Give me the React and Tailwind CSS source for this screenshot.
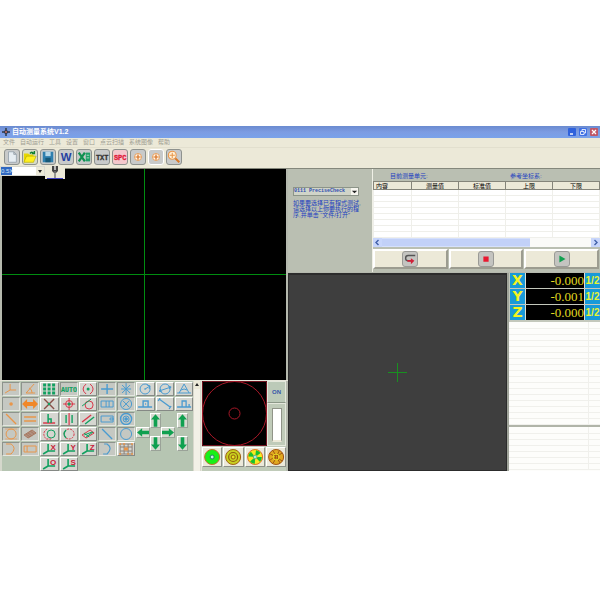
import React, { useState } from 'react';

const menus = ['文件', '自动运行', '工具', '设置', '窗口', '点云扫描', '系统图像', '帮助'];

const axes = [
  { name: 'X', value: '-0.000' },
  { name: 'Y', value: '-0.001' },
  { name: 'Z', value: '-0.000' },
];

const columns = ['内容', '测量值', '标准值', '上限', '下限'];

const O = '#e8964a';
const B = '#4a9bd0';
const G = '#12a060';
const R = '#d8384a';

// Small text drawn inside an icon
const Label = ({ x, y, size, color, children }) => (
  <text x={x} y={y} fontSize={size} fill={color} stroke="none" fontWeight="bold" textAnchor="middle" fontFamily="Liberation Sans, sans-serif">
    {children}
  </text>
);

const axisIcon = (letter) => (
  <>
    <path d="M8 2v7h7M8 9l-5 3" stroke={G} strokeWidth="1.6" />
    <Label x={13} y={7.5} size={8} color="#c82038">{letter}</Label>
  </>
);

const centerIcon = (
  <>
    <circle cx="8" cy="8" r="4" fill="#fff8ec" stroke={O} strokeWidth="1" />
    <path d="M8 5v6M5 8h6" stroke="#d87020" strokeWidth="1.4" />
  </>
);

// Toolbar icons, 16x16
const toolbar = [
  { label: '新建', icon: <path d="M4 2h6l3 3v9H4zM10 2v3h3" fill="#e6edf2" stroke="#98a4ae" /> },
  { label: '打开', bg: 'bg-[#d8dcc8]', icon: <><path d="M1 4h5l1 1h5v9H1z" fill="#e8d800" /><path d="M1 14l3-7h11l-3 7z" fill="#fff020" stroke="#a8a000" strokeWidth=".6" /><path d="M8 4q2-3 4 0M13 1v3h-3" stroke="#108030" strokeWidth="1.6" /></> },
  { label: '保存', icon: <><path d="M2 2h12v12H2z" fill="#2f7fae" /><path d="M5 2h6v5H5z" fill="#b8d8e8" /><path d="M5 9h6v5H5z" fill="#165878" /></> },
  { label: 'Word', icon: <Label x={8} y={13} size={13} color="#2440a0">W</Label> },
  { label: 'Excel', icon: <><path d="M10 3h5v10h-5z" fill="#20a068" /><path d="M11 6h3M11 9h3" stroke="#d8f0e4" strokeWidth=".8" /><path d="M2 3l7 10M9 3L2 13" stroke="#109050" strokeWidth="2.6" /></> },
  { label: '文本', icon: <text x="1" y="11" fontSize="8" fill="#333" stroke="#333" strokeWidth=".3" fontFamily="Liberation Mono, monospace" fontWeight="bold">TXT</text> },
  { label: 'SPC', bg: 'bg-[#f4c8cc]', icon: <text x="1" y="11" fontSize="8" fill="#e01838" stroke="#e01838" strokeWidth=".3" fontFamily="Liberation Mono, monospace" fontWeight="bold">SPC</text> },
  { label: '定位', icon: centerIcon },
  { label: '对中', active: true, icon: centerIcon },
  { label: '放大', icon: <><path d="M9 9l5 5" stroke="#d87828" strokeWidth="2.400" /><circle cx="6" cy="6" r="4.500" fill="#fff0d8" stroke={O} strokeWidth="1.200" /><path d="M6 3v6M3 6h6" stroke={O} strokeWidth="1.200" /></> },
];

// Measuring tools, one array per row, 18x14 each
const tools = [
  [
    { off: true, c: O, icon: <path d="M8 2v6l-5 3M8 8h6" /> },
    { off: true, c: O, icon: <path d="M13 2L5 11h9M8 6q3 1 3 5" /> },
    { c: G, icon: <path d="M3 3h3M7.500 3h3M12 3h3M3 7h3M7.500 7h3M12 7h3M3 11h3M7.500 11h3M12 11h3" strokeWidth="3" /> },
    { c: G, off: true, icon: <text x="1" y="9.500" fontSize="6.600" fontWeight="bold" fill={G} stroke={G} strokeWidth=".2" fontFamily="Liberation Mono, monospace">AUTO</text> },
    { c: R, icon: <><path d="M7 2Q1 7 7 12M11 2q6 5 0 10" /><circle cx="9" cy="7" r="1.500" fill={G} stroke="none" /></> },
    { off: true, c: B, icon: <path d="M9 2v10M3 7h12" strokeWidth="1.400" /> },
    { off: true, c: B, icon: <path d="M9 1v12M4 7h10M5 3l8 8M13 3l-8 8" /> },
    { c: B, icon: <><circle cx="9" cy="7" r="5" /><path d="M9 7l5-3M11 3l3 1-1 3M8 7h2" /></> },
    { c: B, icon: <><circle cx="9" cy="7" r="5" /><path d="M3 9l12-4M5 7L3 9l3 1M12 4l3 1-2 2" /></> },
    { c: B, icon: <path d="M9 2L4 11M9 2l5 9M2 11h14M6 8q3-2 6 0" /> },
  ],
  [
    { off: true, c: O, icon: <circle cx="9" cy="7" r="1.800" fill={O} stroke="none" /> },
    { off: true, c: '#f08828', icon: <path d="M1 7l5-5v3h6V2l5 5-5 5V9H6v3z" fill="#f08828" stroke="none" /> },
    { c: '#8a5048', icon: <><path d="M4 2l10 10M14 2L4 12" strokeWidth="1.400" /><circle cx="9" cy="7" r="1.300" fill={G} stroke="none" /></> },
    { c: R, icon: <><circle cx="9" cy="7" r="3.500" /><path d="M9 1v12M3 7h12" /><circle cx="9" cy="7" r="1.500" fill={G} stroke="none" /></> },
    { c: R, icon: <><circle cx="10" cy="8" r="4" /><path d="M3 9l9-7" stroke={G} /></> },
    { off: true, c: B, icon: <><path d="M3 4h12v6H3z" /><path d="M8 4v6M11 4v6" /></> },
    { off: true, c: B, icon: <><circle cx="9" cy="7" r="5.500" /><path d="M6 4l6 6M12 4l-6 6" /></> },
    { c: B, icon: <path d="M2 10h14M7 10V4h5v6M9 7h1" strokeWidth="1.400" /> },
    { c: B, icon: <path d="M3 2l11 8M2 4l2-3M13 12l2-3" strokeWidth="1.300" /> },
    { c: B, icon: <path d="M2 10h14M7 10V4h4v6M14 7v3" strokeWidth="1.300" /> },
  ],
  [
    { off: true, c: O, icon: <path d="M4 2l10 10" strokeWidth="1.300" /> },
    { off: true, c: O, icon: <path d="M3 5h12M3 9h12" strokeWidth="1.300" /> },
    { c: G, icon: <><path d="M3 11h12" stroke={R} strokeWidth="1.500" /><path d="M8 2v9M8 7h3v4" strokeWidth="1.500" /></> },
    { c: G, icon: <><path d="M9 1v12" stroke={R} strokeWidth="1.200" /><path d="M6 3v8M12 3v8" strokeWidth="1.400" /></> },
    { c: R, icon: <><path d="M3 10l9-7" strokeWidth="1.400" /><path d="M6 12l9-7" stroke={G} strokeWidth="1.400" /></> },
    { off: true, c: B, icon: <path d="M3 4h12v6H3zM12 6h3v2h-3z" /> },
    { off: true, c: B, icon: <><circle cx="9" cy="7" r="5.500" strokeWidth="1.400" /><circle cx="9" cy="7" r="3" /><circle cx="9" cy="7" r="1.300" fill={B} /></> },
  ],
  [
    { off: true, c: O, icon: <><circle cx="9" cy="7" r="5" /><path d="M3 2h12M3 12h12" strokeWidth=".6" /></> },
    { off: true, c: '#a87860', icon: <path d="M3 8l8-5 4 3-8 5zM5 7l4 3M7 6l4 3M9 4l4 3" fill="#b09080" /> },
    { c: G, icon: <><circle cx="11" cy="7" r="4" /><path d="M7 2Q1 6 6 12h5" stroke={R} strokeDasharray="2 1" /></> },
    { c: R, icon: <><circle cx="9" cy="7" r="5" strokeDasharray="2 1" /><path d="M6 3Q2 7 6 11" stroke={G} strokeWidth="1.300" /></> },
    { c: R, icon: <><path d="M3 8l8-5 4 3-8 5z" /><path d="M5 8l8-3M7 10l7-5M5 6l5 4" stroke={G} /></> },
    { off: true, c: B, icon: <path d="M4 2l10 10" strokeWidth="1.400" /> },
    { off: true, c: B, icon: <circle cx="9" cy="7" r="5.500" /> },
  ],
  [
    { off: true, c: O, icon: <path d="M4 2h5q6 4 0 10H4" /> },
    { off: true, c: O, icon: <path d="M3 4h12v6H3zM6 4v6" /> },
    { icon: axisIcon('X') },
    { icon: axisIcon('Y') },
    { icon: axisIcon('Z') },
    { off: true, c: B, icon: <path d="M6 2h3q6 4 0 10H5" strokeWidth="1.200" /> },
    { c: '#8a8078', icon: <><path d="M3 2h12v10H3zM7 2v10M11 2v10M3 5h12M3 9h12" /><path d="M7 7h4" stroke={O} strokeWidth="3" /><path d="M2 2h2M14 2h2M2 12h2M14 12h2M6 2h2M10 12h2" stroke={O} strokeWidth="1.600" /></> },
  ],
  [null, null, { icon: axisIcon('O') }, { icon: axisIcon('S') }],
];

const ToolButton = ({ tool, label }) => (
  <button
    type="button"
    aria-label={label}
    className={`h-[14px] border ${tool.off
      ? 'bg-[#c5c8c2] border-t-[#8d938c] border-l-[#8d938c] border-b-[#e4e6e0] border-r-[#e4e6e0]'
      : 'bg-[#d5d6d0] border-t-white border-l-white border-b-[#858985] border-r-[#858985]'}`}
  >
    <svg viewBox="1 1 16 12" className="w-full h-full" fill="none" stroke={tool.c}>{tool.icon}</svg>
  </button>
);

const Arrow = ({ dir }) => {
  const vertical = dir === 'up' || dir === 'down';
  return (
    <button
      type="button"
      aria-label={dir}
      className={`shrink-0 bg-[#d5dacf] border border-t-white border-l-white border-b-[#9aa298] border-r-[#9aa298] ${vertical ? 'w-[11px] h-[15px]' : 'w-[14px] h-[11px]'}`}
    >
      {vertical ? (
        <svg viewBox="0 0 10 14" className="w-full h-full"><path d={dir === 'up' ? 'M5 0l5 6H7v8H3V6H0z' : 'M5 14l5-6H7V0H3v8H0z'} fill="#10a050" /></svg>
      ) : (
        <svg viewBox="0 0 14 10" className="w-full h-full"><path d={dir === 'left' ? 'M0 5l6-5v3h8v4H6v3z' : 'M14 5L8 0v3H0v4h8v3z'} fill="#10a050" /></svg>
      )}
    </button>
  );
};

const lights = [
  { label: '底光', icon: <><circle cx="9" cy="9" r="7.500" fill="#18f018" stroke="#c07030" /><circle cx="9" cy="9" r="2" fill="#c8f0e0" stroke="#208060" /></> },
  { label: '环光', icon: <><circle cx="9" cy="9" r="7.500" fill="#c8d020" stroke="#a06010" /><circle cx="9" cy="9" r="4.500" fill="none" stroke="#906010" strokeWidth="1.200" /><circle cx="9" cy="9" r="2" fill="#e8e020" stroke="#906010" /></> },
  { label: '分区光', icon: <><circle cx="9" cy="9" r="7.500" fill="#f8e820" stroke="#e07020" /><circle cx="9" cy="9" r="4.500" fill="none" stroke="#18c030" strokeWidth="4.500" strokeDasharray="3.500 3.600" /><circle cx="9" cy="9" r="1.800" fill="#a0f0e8" stroke="#408080" strokeWidth=".6" /></> },
  { label: '全部光', icon: <><circle cx="9" cy="9" r="7.500" fill="#e0a820" stroke="#a05010" /><path d="M3 6q6 4 12-1M3 12q5-5 12 1M6 3q5 6 0 12M12 3q-4 6 1 12" stroke="#a05810" fill="none" /><circle cx="9" cy="9" r="3" fill="none" stroke="#e8e020" /></> },
];

const runButtons = [
  { label: '返回', icon: <><path d="M14 4H6q-3 0-3 3t3 3h3" stroke="#555" strokeWidth="1.6" fill="none" /><path d="M5 10h5" stroke="#d02038" strokeWidth="2" /><path d="M9 7l4 3-4 4z" fill="#d02038" /></> },
  { label: '停止', icon: <path d="M5 5h6v6H5z" fill="#e81830" /> },
  { label: '运行', icon: <path d="M5 4l7 4-7 4z" fill="#10a050" /> },
];

const TitleBar = () => (
  <header className="flex items-center h-3 px-[2px] bg-linear-to-b from-[#6a8bd0] via-[#7d9ce2] to-[#7aa2ea]">
    <svg viewBox="0 0 8 8" className="w-2 h-2 mr-[2px]"><path d="M4 0v8M0 4h8" stroke="#405068" strokeWidth="2" /><circle cx="4" cy="4" r="2" fill="#303c50" /><circle cx="4" cy="4" r="1" fill="#d07060" /></svg>
    <h1 className="grow text-[7px] leading-3 font-bold text-white">自动测量系统V1.2</h1>
    <div className="flex gap-[3px]">
      <button type="button" aria-label="最小化" className="w-2 h-2 rounded-[1px] bg-[#2f62dc]">
        <svg viewBox="0 0 8 8"><path d="M2 6h3" stroke="#fff" strokeWidth="1.400" /></svg>
      </button>
      <button type="button" aria-label="还原" className="w-2 h-2 rounded-[1px] bg-[#3f70e4]">
        <svg viewBox="0 0 8 8" fill="none" stroke="#fff"><path d="M3 3V1.500h3.500V5H5M1.500 3.500H5v3H1.500z" strokeWidth=".8" /></svg>
      </button>
      <button type="button" aria-label="关闭" className="w-2 h-2 rounded-[1px] bg-[#c05868]">
        <svg viewBox="0 0 8 8"><path d="M2 2l4 4M6 2L2 6" stroke="#fff" strokeWidth="1.200" /></svg>
      </button>
    </div>
  </header>
);

const Camera = () => (
  <section className="relative h-[211px] bg-black border-x-2 border-[#b5b9ae]">
    <svg className="block w-full h-full" stroke="#008c10" shapeRendering="crispEdges">
      <line x1="50%" y1="0" x2="50%" y2="100%" />
      <line x1="0" y1="50%" x2="100%" y2="50%" />
    </svg>
    <div className="absolute -top-[3px] -left-[2px] flex items-start">
      <div className="relative">
        <select aria-label="倍率" className="block w-[45px] h-[10px] appearance-none bg-white bg-linear-to-r from-[#3068c0] from-25% to-white to-25% border border-[#d8d8d0] text-[6px] leading-2 text-[#d0e4f8]">
          <option>0.5X</option>
        </select>
        <svg viewBox="0 0 8 8" className="absolute right-[1px] top-[1px] w-2 h-2 bg-[#ece9d8] pointer-events-none"><path d="M2 3h4L4 6z" fill="#222" /></svg>
      </div>
      <div className="flex pl-[2px] pr-[2px] bg-[#ece9d8]">
        <button type="button" aria-label="探针" className="w-4 h-[13px] bg-[#ece9d8] border-b border-[#4040c0]">
          <svg viewBox="0 0 14 12" className="w-full h-full"><path d="M4 0h6v5L8 7H6L4 5z" fill="#444" /><path d="M7 5v7" stroke="#777" strokeWidth="1.400" /><path d="M6 0h2v4H6z" fill="#bbb" /></svg>
        </button>
      </div>
    </div>
  </section>
);

const ToolPanel = () => (
  <section className="flex flex-1 min-w-0 bg-[#b6c5b2] border-l-2 border-[#d5d8cc]">
    <div className="flex-1 min-w-0 pt-[1px]">
      <div className="grid grid-cols-10 gap-[1px]">
        {tools.slice(0, 2).map((row, r) => row.map((tool, i) => <ToolButton key={`${r}-${i}`} tool={tool} label={`工具 ${r + 1}-${i + 1}`} />))}
      </div>
      <div className="grid grid-cols-10 gap-[1px] mt-[1px]">
        <div className="col-span-7 grid grid-cols-7 gap-[1px]">
          {tools.slice(2).map((row, r) => row.map((tool, i) => (
            tool
              ? <ToolButton key={`${r}-${i}`} tool={tool} label={`工具 ${r + 3}-${i + 1}`} />
              : <span key={`${r}-${i}`} />
          )))}
        </div>
        <div className="col-span-3 flex items-center self-start pt-[1px]">
          <Arrow dir="left" />
          <div className="flex flex-col gap-2"><Arrow dir="up" /><Arrow dir="down" /></div>
          <Arrow dir="right" />
          <div className="flex flex-col gap-2 ml-[2px]"><Arrow dir="up" /><Arrow dir="down" /></div>
        </div>
      </div>
    </div>
    <div className="w-2 shrink-0 bg-[#f2f0e6] border-x border-[#d8d8cc]">
      <svg viewBox="0 0 6 8" className="w-full h-2 bg-[#ece9d8]"><path d="M3 2l2 3H1z" fill="#222" /></svg>
    </div>
  </section>
);

const LightPanel = () => {
  const [level, setLevel] = useState(0);
  return (
    <section className="w-[87px] shrink-0 bg-[#c0cbb9] border-l border-r-2 border-[#e6e6da] border-r-[#b5b9ae]">
      <div className="flex">
        <svg viewBox="0 0 65 65" className="w-[65px] h-[65px] bg-black" fill="none" stroke="#a81828">
          <path d="M.5 .5h64v64H.5z" stroke="#701420" />
          <circle cx="32.500" cy="32.500" r="32" />
          <circle cx="32.500" cy="32.500" r="5.500" />
        </svg>
        <div className="grow flex flex-col">
          <button type="button" className="h-[22px] bg-[#bccab8] border border-[#e4e8dc] border-b-[#8c9888] text-[6px] font-bold text-[#3858a8]">ON</button>
          <div className="grow flex justify-center items-center border border-[#e4e8dc]">
            <input
              type="range"
              aria-label="亮度"
              min="0"
              max="100"
              value={level}
              onChange={(e) => setLevel(e.target.value)}
              className="appearance-none w-[10px] h-[34px] bg-white border border-[#909488] border-b-2 border-b-[#ece9d8] [writing-mode:vertical-lr] [&::-webkit-slider-thumb]:appearance-none"
            />
          </div>
        </div>
      </div>
      <div className="flex gap-[1px] mt-[1px]">
        {lights.map((light) => (
          <button key={light.label} type="button" aria-label={light.label} className="grow h-5 bg-[#ebe9da] border border-t-white border-l-white border-[#8c9088]">
            <svg viewBox="0 0 18 18" className="w-full h-full">{light.icon}</svg>
          </button>
        ))}
      </div>
    </section>
  );
};

const ProgramPanel = () => (
  <section className="w-[84px] shrink-0 pt-[18px] pl-[5px] bg-[#babfb2]">
    <div className="relative w-[66px]">
      <select aria-label="程序" className="block w-full h-[9px] appearance-none bg-[#d0d4c8] border border-[#8c9488] text-[5px] leading-[7px] font-bold text-[#3050b0] font-['Liberation_Mono','Noto_Sans_CJK_SC',monospace]">
        <option>0111 PreciseCheck</option>
      </select>
      <svg viewBox="0 0 8 8" className="absolute right-[1px] top-[1px] w-[7px] h-[7px] bg-[#f6f5ee] pointer-events-none"><path d="M1 3h6L4 6z" fill="#222" /></svg>
    </div>
    <p className="mt-1 text-[6px] leading-[6px] text-[#1c40c0] whitespace-nowrap">
      如果要选择已有程式测试,<br />请选择以上你要执行的程<br />序,并单击 “文件/打开”
    </p>
  </section>
);

const DataPanel = () => (
  <section className="flex-1 min-w-0 bg-[#babfb2] border-l border-[#f0f0e6]">
    <div className="flex h-3 pt-[3px] pl-[17px] text-[6px] leading-2 text-[#1c40c0]">
      <span className="w-[120px]">目前测量单元:</span>
      <span>参考坐标系:</span>
    </div>
    <table className="w-full table-fixed border-collapse bg-white text-[6px] leading-[6px]">
      <thead>
        <tr className="bg-[#ece9d8]">
          {columns.map((name, i) => (
            <th key={name} className={`h-2 p-0 font-normal text-black border border-[#85857a] ${i === 0 ? 'w-[38px] text-left pl-[2px]' : ''}`}>{name}</th>
          ))}
        </tr>
      </thead>
      <tbody>
        {[...Array(8)].map((_, r) => (
          <tr key={r}>
            {columns.map((name) => <td key={name} className="h-[6px] p-0 border border-[#efefea]" />)}
          </tr>
        ))}
      </tbody>
    </table>
    <div className="flex h-[9px] bg-[#fafaf8]">
      <button type="button" aria-label="向左" className="w-[9px] bg-[#c8d6fb]"><svg viewBox="0 0 9 9"><path d="M5.500 2L3 4.500 5.500 7" stroke="#4060a8" fill="none" strokeWidth="1.400" /></svg></button>
      <div className="grow flex"><div className="w-[71%] bg-[#c2d1f8] border-y border-[#d5e0fc]" /></div>
      <button type="button" aria-label="向右" className="w-[9px] bg-[#c8d6fb]"><svg viewBox="0 0 9 9"><path d="M3.500 2L6 4.500 3.500 7" stroke="#4060a8" fill="none" strokeWidth="1.400" /></svg></button>
    </div>
    <div className="flex gap-[1px] pt-[2px] pb-[3px] pr-[1px]">
      {runButtons.map((b) => (
        <button key={b.label} type="button" aria-label={b.label} className="flex-1 flex justify-center items-center h-5 bg-[#ece9d8] border-2 border-t-white border-l-white border-b-[#9c9c90] border-r-[#9c9c90]">
          <svg viewBox="0 0 16 16" className="w-4 h-4 rounded-[3px] bg-[#c4c4c0] border border-[#9a9a96]">{b.icon}</svg>
        </button>
      ))}
    </div>
  </section>
);

const Lines = ({ rows }) => (
  <table className="w-full table-fixed border-collapse bg-[#fdfdfb]">
    <tbody>
      {[...Array(rows)].map((_, i) => (
        <tr key={i}>
          <td className="h-[6px] p-0 border-b border-r border-[#f0f0ec]" />
          <td className="h-[6px] w-3 p-0 border-b border-[#f0f0ec]" />
        </tr>
      ))}
    </tbody>
  </table>
);

const ReadoutPanel = () => (
  <aside className="w-[93px] shrink-0 flex flex-col border-l-2 border-[#a0a49a] bg-[#c4c8bc]">
    <div className="flex flex-col gap-[1px] pb-[2px] pl-[1px]">
      {axes.map((axis) => (
        <div key={axis.name} className="flex gap-[1px] h-[15px] bg-[#e0e0d4]">
          <span className="flex justify-center items-center w-[15px] bg-[#189ad8] text-[14px] leading-[15px] font-bold text-[#f4f420] font-['DejaVu_Sans',sans-serif]">{axis.name}</span>
          <span className="grow bg-black text-right text-[13px] leading-[15px] text-[#e0d820] font-['Liberation_Serif',serif]">{axis.value}</span>
          <button type="button" className="w-[15px] bg-[#189ad8] text-[10px] leading-[15px] font-bold text-[#e8f430] font-['Liberation_Sans',sans-serif]">1/2</button>
        </div>
      ))}
    </div>
    <div className="h-[103px] bg-[#fdfdfb]"><Lines rows={17} /></div>
    <div className="grow border-t-2 border-[#b0b4a8] bg-[#fdfdfb]"><Lines rows={7} /></div>
  </aside>
);

const App = () => {
  return (
    <div className="min-h-screen bg-white py-[126px] font-['Liberation_Sans','Noto_Sans_CJK_SC',sans-serif]">
      <TitleBar />
      <nav className="flex items-center gap-[5px] h-[10px] px-[3px] bg-[#ece9d8] border-b border-[#e2dfce] text-[6px] leading-[9px]">
        {menus.map((m) => <button key={m} type="button" className="text-[#a09e92]">{m}</button>)}
      </nav>
      <div className="flex gap-[2px] h-5 px-1 pt-[1px] bg-[#ece9d8]">
        {toolbar.map((item) => (
          <button
            key={item.label}
            type="button"
            aria-label={item.label}
            className={`w-4 h-4 rounded-[3px] border ${item.active ? 'border-white' : 'border-[#8e928e]'} ${item.bg || 'bg-[#c8caca]'}`}
          >
            <svg viewBox="0 0 16 16" fill="none">{item.icon}</svg>
          </button>
        ))}
      </div>
      <main className="flex border-t border-[#85887c] bg-[#b5b9ae]">
        <div className="flex flex-col w-[48%] shrink-0">
          <Camera />
          <div className="flex grow border-t border-[#e6e6da]">
            <ToolPanel />
            <LightPanel />
          </div>
        </div>
        <div className="flex flex-col flex-1 min-w-0">
          <div className="flex">
            <ProgramPanel />
            <DataPanel />
          </div>
          <div className="flex grow mt-[1px]">
            <section className="grow flex justify-center items-center bg-[#3e3e3e] border border-t-2 border-[#2c2c2c]">
              <svg viewBox="0 0 19 19" className="w-[19px] h-[19px]" stroke="#189020"><path d="M9.500 0v19M0 9.500h19" /></svg>
            </section>
            <ReadoutPanel />
          </div>
        </div>
      </main>
    </div>
  );
};

export default App;
